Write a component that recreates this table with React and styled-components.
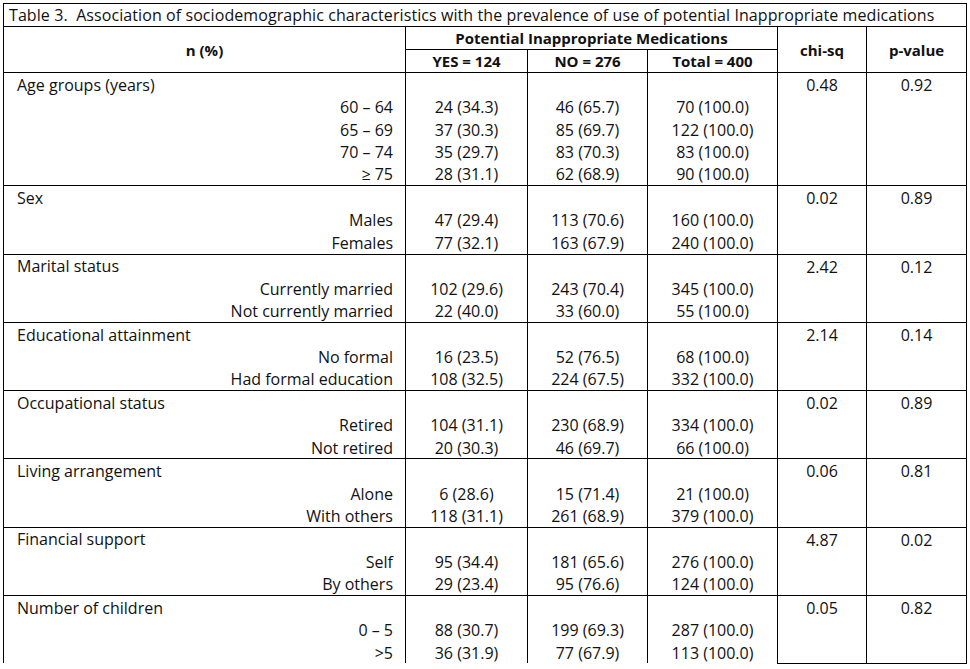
import React from "react";
import styled, { createGlobalStyle } from "styled-components";

const GlobalStyle = createGlobalStyle`
  html, body {
    margin: 0;
    padding: 0;
    background: #ffffff;
  }
  body {
    font-family: "Open Sans", Lato, sans-serif;
    color: #111;
  }
`;

const Page = styled.div`
  padding: 3px 0 0 3px;
`;

const Table = styled.table`
  border-collapse: collapse;
  table-layout: fixed;
  width: 963px;
  font-size: 16px;
`;

const Caption = styled.td`
  border: 1px solid #000;
  height: 22px;
  padding: 0 0 0 5px;
  text-align: left;
  white-space: nowrap;
  line-height: 22px;
  letter-spacing: 0.08px;
`;

const HeadCell = styled.th`
  border: 1px solid #000;
  height: 22px;
  padding: 0;
  font-size: 15px;
  font-weight: 700;
  text-align: center;
  vertical-align: middle;
  line-height: 20px;
`;

const LabelCell = styled.td`
  border-left: 1px solid #000;
  border-right: 1px solid #000;
  border-top: ${(p) => (p.$first ? "1px solid #000" : "none")};
  height: 21.44px;
  padding: 1px 12px 0 13px;
  line-height: 20px;
  text-align: ${(p) => (p.$group ? "left" : "right")};
  white-space: nowrap;
`;

const DataCell = styled.td`
  border-left: 1px solid #000;
  border-right: 1px solid #000;
  border-top: ${(p) => (p.$first ? "1px solid #000" : "none")};
  padding: 1px 0 0;
  line-height: 20px;
  text-align: center;
  white-space: nowrap;
`;

const StatCell = styled.td`
  border: 1px solid #000;
  padding: 1px 0 0;
  text-align: center;
  vertical-align: top;
  line-height: 22px;
`;

const sections = [
  {
    name: "Age groups (years)",
    chi: "0.48",
    p: "0.92",
    rows: [
      ["60 – 64", "24 (34.3)", "46 (65.7)", "70 (100.0)"],
      ["65 – 69", "37 (30.3)", "85 (69.7)", "122 (100.0)"],
      ["70 – 74", "35 (29.7)", "83 (70.3)", "83 (100.0)"],
      ["≥ 75", "28 (31.1)", "62 (68.9)", "90 (100.0)"],
    ],
  },
  {
    name: "Sex",
    chi: "0.02",
    p: "0.89",
    rows: [
      ["Males", "47 (29.4)", "113 (70.6)", "160 (100.0)"],
      ["Females", "77 (32.1)", "163 (67.9)", "240 (100.0)"],
    ],
  },
  {
    name: "Marital status",
    chi: "2.42",
    p: "0.12",
    rows: [
      ["Currently married", "102 (29.6)", "243 (70.4)", "345 (100.0)"],
      ["Not currently married", "22 (40.0)", "33 (60.0)", "55 (100.0)"],
    ],
  },
  {
    name: "Educational attainment",
    chi: "2.14",
    p: "0.14",
    rows: [
      ["No formal", "16 (23.5)", "52 (76.5)", "68 (100.0)"],
      ["Had formal education", "108 (32.5)", "224 (67.5)", "332 (100.0)"],
    ],
  },
  {
    name: "Occupational status",
    chi: "0.02",
    p: "0.89",
    rows: [
      ["Retired", "104 (31.1)", "230 (68.9)", "334 (100.0)"],
      ["Not retired", "20 (30.3)", "46 (69.7)", "66 (100.0)"],
    ],
  },
  {
    name: "Living arrangement",
    chi: "0.06",
    p: "0.81",
    rows: [
      ["Alone", "6 (28.6)", "15 (71.4)", "21 (100.0)"],
      ["With others", "118 (31.1)", "261 (68.9)", "379 (100.0)"],
    ],
  },
  {
    name: "Financial support",
    chi: "4.87",
    p: "0.02",
    rows: [
      ["Self", "95 (34.4)", "181 (65.6)", "276 (100.0)"],
      ["By others", "29 (23.4)", "95 (76.6)", "124 (100.0)"],
    ],
  },
  {
    name: "Number of children",
    chi: "0.05",
    p: "0.82",
    rows: [
      ["0 – 5", "88 (30.7)", "199 (69.3)", "287 (100.0)"],
      [">5", "36 (31.9)", "77 (67.9)", "113 (100.0)"],
    ],
  },
];

function Section({ s }) {
  const span = s.rows.length + 1;
  return (
    <>
      <tr>
        <LabelCell $first $group>{s.name}</LabelCell>
        <DataCell $first />
        <DataCell $first />
        <DataCell $first />
        <StatCell rowSpan={span}>{s.chi}</StatCell>
        <StatCell rowSpan={span}>{s.p}</StatCell>
      </tr>
      {s.rows.map((r) => (
        <tr key={r[0]}>
          <LabelCell>{r[0]}</LabelCell>
          <DataCell>{r[1]}</DataCell>
          <DataCell>{r[2]}</DataCell>
          <DataCell>{r[3]}</DataCell>
        </tr>
      ))}
    </>
  );
}

export default function App() {
  return (
    <Page>
      <GlobalStyle />
      <Table>
        <colgroup>
          <col style={{ width: 402 }} />
          <col style={{ width: 122 }} />
          <col style={{ width: 120 }} />
          <col style={{ width: 130 }} />
          <col style={{ width: 89 }} />
          <col style={{ width: 100 }} />
        </colgroup>
        <tbody>
          <tr>
            <Caption colSpan={6}>
              Table 3.&nbsp; Association of sociodemographic characteristics with the prevalence of use of potential Inappropriate medications
            </Caption>
          </tr>
          <tr>
            <HeadCell rowSpan={2}>n (%)</HeadCell>
            <HeadCell colSpan={3}>Potential Inappropriate Medications</HeadCell>
            <HeadCell rowSpan={2}>chi-sq</HeadCell>
            <HeadCell rowSpan={2}>p-value</HeadCell>
          </tr>
          <tr>
            <HeadCell>YES = 124</HeadCell>
            <HeadCell>NO = 276</HeadCell>
            <HeadCell>Total = 400</HeadCell>
          </tr>
          {sections.map((s) => (
            <Section key={s.name} s={s} />
          ))}
        </tbody>
      </Table>
    </Page>
  );
}
